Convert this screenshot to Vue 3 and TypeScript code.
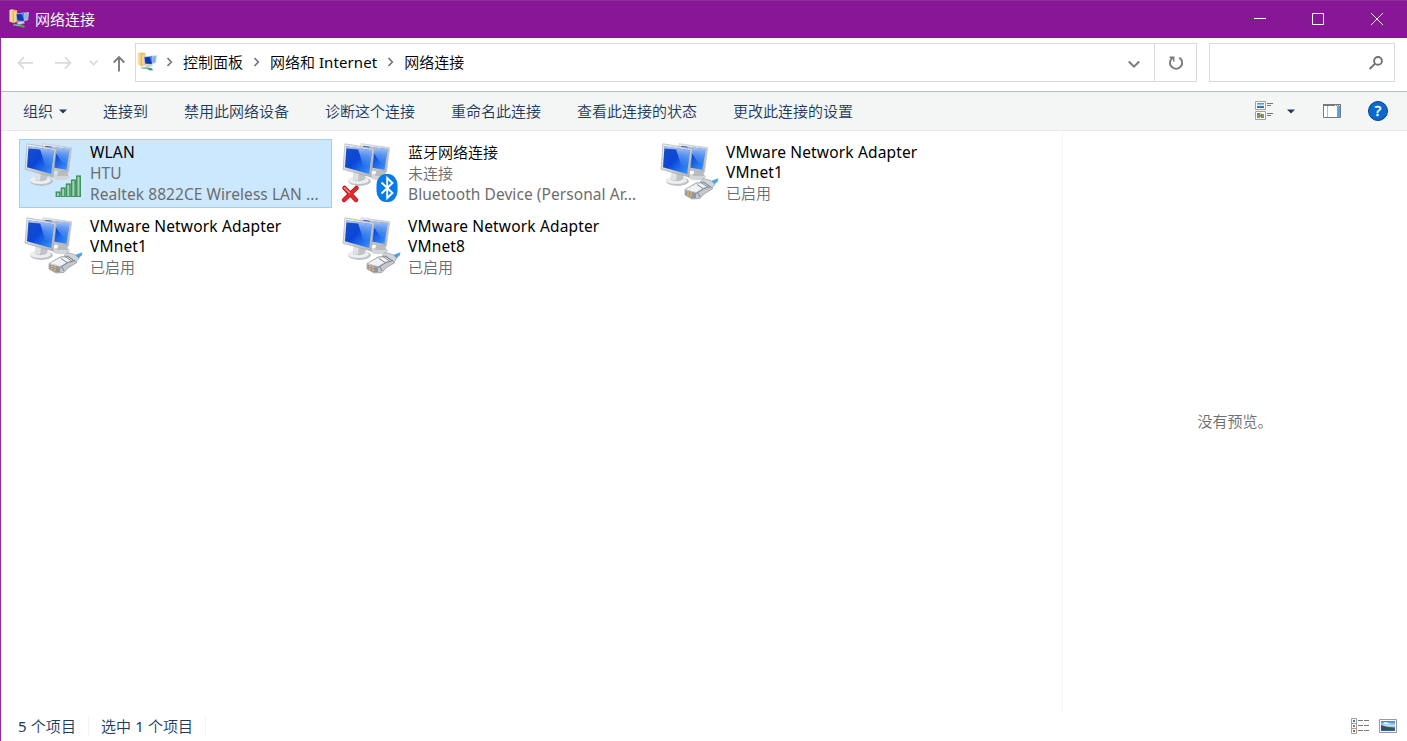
<script setup lang="ts">
type Badge = 'signal' | 'bluetooth' | 'plug'

interface Connection {
  title: string[]
  details: string[]
  badge: Badge
  disconnected?: boolean
  selected?: boolean
}

const crumbs = ['控制面板', '网络和 Internet', '网络连接']
const commands = ['连接到', '禁用此网络设备', '诊断这个连接', '重命名此连接', '查看此连接的状态', '更改此连接的设置']

const connections: Connection[] = [
  { title: ['WLAN'], details: ['HTU', 'Realtek 8822CE Wireless LAN ...'], badge: 'signal', selected: true },
  { title: ['蓝牙网络连接'], details: ['未连接', 'Bluetooth Device (Personal Ar...'], badge: 'bluetooth', disconnected: true },
  { title: ['VMware Network Adapter', 'VMnet1'], details: ['已启用'], badge: 'plug' },
  { title: ['VMware Network Adapter', 'VMnet1'], details: ['已启用'], badge: 'plug' },
  { title: ['VMware Network Adapter', 'VMnet8'], details: ['已启用'], badge: 'plug' },
]

const isLatin = (text: string): boolean => /^[\x20-\x7e]+$/.test(text)

// Splits mixed text so that Latin words and digits can carry their own weight.
const runs = (text: string): string[] => text.match(/[\x21-\x7e]+|[^\x21-\x7e]+/g) ?? []

const bars = [0, 1, 2, 3, 4].map((i) => ({ x: 36.6 + i * 5.1, h: 5.6 + i * 4 }))
</script>

<template>
  <div class="window">
    <svg class="defs" width="0" height="0">
      <defs>
        <linearGradient id="screen" x1="0" y1="0" x2="1" y2="1">
          <stop offset="0" stop-color="#1d4fc0" />
          <stop offset=".45" stop-color="#0a46d8" />
          <stop offset="1" stop-color="#3f9bff" />
        </linearGradient>
        <linearGradient id="shine" x1="0" y1="0" x2="0" y2="1">
          <stop offset="0" stop-color="#d4e9ff" stop-opacity=".85" />
          <stop offset="1" stop-color="#5ba8ff" stop-opacity=".15" />
        </linearGradient>
        <linearGradient id="metal" x1="0" y1="0" x2="1" y2="1">
          <stop offset="0" stop-color="#f5f6f7" />
          <stop offset="1" stop-color="#a9adb2" />
        </linearGradient>
        <linearGradient id="folder" x1="0" y1="0" x2="1" y2="0">
          <stop offset="0" stop-color="#ffe8a8" />
          <stop offset="1" stop-color="#dba650" />
        </linearGradient>
        <linearGradient id="photo" x1="0" y1="0" x2="0" y2="1">
          <stop offset="0" stop-color="#2f7fe0" />
          <stop offset=".5" stop-color="#d5ecfb" />
          <stop offset=".65" stop-color="#5e8190" />
          <stop offset="1" stop-color="#1e60ae" />
        </linearGradient>
        <symbol id="network-folder" viewBox="0 0 20 20">
          <path d="M.5 1 3 .2l5 1V12.500L4.500 14 .5 12.500z" fill="url(#folder)" />
          <path d="M4.500 2.500 8 1.500v11L4.500 14z" fill="#f6d68c" stroke="#c99c4d" stroke-width=".5" />
          <path d="M12.500 4.500 19.500 3.500l-.8 7.500-5.500.5z" fill="#7fb4ee" stroke="#d2d9df" stroke-width=".7" />
          <path d="m7 5 8.500-1-.3 8.500-7.200-.5z" fill="#1236b4" stroke="#c9d4e4" stroke-width=".7" />
          <path d="m12.500 4.800 2.600-.3-.4 6.500z" fill="#4a8cf0" />
          <path d="M9 12.800h5.500l1.500 1.400-5.500 1-3-1z" fill="#cdd2d4" />
          <path d="M4 15.300h7l3 .8 2 1.300-1.500 1-3-1-7-1z" fill="#7abf93" />
          <path d="M10.500 16.200h4l1.500 2h-4z" fill="#3f9a62" />
        </symbol>
      </defs>
    </svg>

    <header class="titlebar">
      <svg class="app-icon" viewBox="0 0 20 20"><use href="#network-folder" /></svg>
      <span class="app-title">网络连接</span>
      <div class="caption-buttons">
        <svg viewBox="0 0 12 12"><path d="M0 5.500h12" /></svg>
        <svg viewBox="0 0 12 12"><path d="M.5.5h11v11H.5z" /></svg>
        <svg viewBox="0 0 12 12"><path d="m0 0 12 12M12 0 0 12" /></svg>
      </div>
    </header>

    <nav class="navbar">
      <svg class="nav-arrows" viewBox="0 0 110 38" fill="none">
        <g stroke="#dadada" stroke-width="1.700">
          <path d="M17 19.900h15M23 14.200l-5.500 5.700 5.500 5.700" />
          <path d="M54 19.900h15.500M64 14.200l5.500 5.700-5.500 5.700" />
          <path d="m88.500 17.500 4 4 4-4" />
        </g>
      </svg>
      <svg class="up-arrow" viewBox="0 0 14 18" fill="none"><path d="M7 16.500V2M1.700 7.500 7 2l5.300 5.500" stroke="#7b7b7b" stroke-width="1.900" /></svg>
      <div class="address">
        <svg class="address-icon" viewBox="0 0 20 20"><use href="#network-folder" /></svg>
        <template v-for="crumb in crumbs" :key="crumb">
          <svg class="crumb-chevron" viewBox="0 0 7 10" fill="none"><path d="m1.500 1 3.800 4-3.800 4" stroke="#777" stroke-width="1.700" /></svg>
          <span class="crumb"><span v-for="(run, i) in runs(crumb)" :key="i" :class="{ word: isLatin(run) }">{{ run }}</span></span>
        </template>
        <svg class="dropdown" viewBox="0 0 13 9" fill="none"><path d="m1.800 1.500 5.200 5.200 5.200-5.200" stroke="#7b7b7b" stroke-width="2" /></svg>
        <div class="refresh">
          <svg viewBox="0 0 16 16" fill="none" stroke="#7b7b7b" stroke-width="1.900">
            <path d="M11.300 2.600A6.100 6.100 0 1 1 4.800 2.600" />
            <path d="M1.500 2.200h4.200v4.400" stroke-width="1.500" />
          </svg>
        </div>
      </div>
      <div class="search">
        <svg viewBox="0 0 14 14" fill="none" stroke="#777071" stroke-width="1.900">
          <circle cx="9" cy="4.900" r="3.900" /><path d="M6 7.600.7 13" />
        </svg>
      </div>
    </nav>

    <div class="toolbar">
      <div class="organize">
        <span>组织</span>
        <svg viewBox="0 0 8 5"><path d="M0 .5h8L4 4.500z" /></svg>
      </div>
      <span v-for="command in commands" :key="command" class="command">{{ command }}</span>
      <div class="toolbar-end">
        <svg class="view-icon" viewBox="0 0 19 20">
          <g fill="#fff" stroke="#a0a0a0"><path d="M.5.5h10v8H.5zM.5 10.500h10v8H.5z" /></g>
          <rect x="2" y="2" width="7" height="5" fill="url(#photo)" />
          <path d="M2 12h3v2H2z" fill="#547fc4" /><path d="M5 12h2v4H4z" fill="#e6c44d" /><path d="M2 14h3v3H2z" fill="#6aa363" /><path d="M6 13h3v4H6z" fill="#59a667" /><path d="M5 14h2v2H5z" fill="#cb604f" />
          <path d="M12 2.500h6M12 4.500h4M12 12.500h6M12 14.500h4" stroke="#777" />
        </svg>
        <svg class="view-caret" viewBox="0 0 8 5"><path d="M0 .5h8L4 4.500z" /></svg>
        <svg class="pane-icon" viewBox="0 0 18 14">
          <path d="M.5.5h17v13H.5z" fill="#fff" stroke="#777" />
          <path d="M0 1h18" stroke="#777" stroke-width="2" />
          <path d="M12 1.500h1m1 0h1m1 0h1" stroke="#eee" />
          <path d="M4.500 2v11" stroke="#bbb" />
          <path d="M14 2h3v11h-3z" fill="#51aae6" />
        </svg>
        <svg class="help" viewBox="0 0 20 20"><circle cx="10" cy="10" r="9.500" fill="#0869ce" stroke="#0b4180" /><text x="10" y="15.400" text-anchor="middle">?</text></svg>
      </div>
    </div>

    <main class="body">
      <section class="items">
        <article v-for="(item, index) in connections" :key="index" class="item" :class="{ selected: item.selected }">
          <svg class="item-icon" viewBox="0 0 68 68">
            <ellipse cx="42" cy="37.800" rx="9" ry="3.500" fill="#d3d6d9" />
            <path d="M40 29h8l1 8H38z" fill="#b9bcc1" />
            <path d="m24 4.700 28.500 4-.3 4-2.800 20.500L23 30z" fill="url(#metal)" stroke="#b8bcc2" stroke-width=".6" />
            <path d="m26 6.700 24.500 3.500-3 20.500L25 27z" fill="url(#screen)" />
            <path d="m32 7.600 18.500 2.600-2.500 15-5-2z" fill="url(#shine)" />
            <ellipse cx="22.500" cy="42.300" rx="11.500" ry="4.600" fill="#bec1c5" />
            <ellipse cx="21.300" cy="41.200" rx="10.500" ry="3.900" fill="#edeeef" />
            <path d="m17 32 12 3-1 5.500q-5 3-12 .5z" fill="#bfc2c7" />
            <path d="m17 32 5 1.500-1 8-5-1z" fill="#dfe1e3" />
            <path d="m8 4.800 29.500 5-.6 3-2.800 25.200L6 30.300z" fill="url(#metal)" stroke="#a9adb3" stroke-width=".7" />
            <path d="m9.500 7.200 25.500 4-2.800 23.800L8 28.300z" fill="url(#screen)" />
            <path d="M9.500 7.200 35 11.200l-1.800 14.500-7 1.300-5-16.500-11.800-1z" fill="url(#shine)" />

            <g v-if="item.badge === 'signal'">
              <g v-for="bar in bars" :key="bar.x">
                <rect :x="bar.x" :y="58 - bar.h" width="5" :height="bar.h" fill="#3e9362" />
                <rect :x="bar.x + 1.400" :y="59.500 - bar.h" width="2.100" :height="bar.h - 2.500" fill="#a5d0b0" />
              </g>
            </g>
            <g v-else-if="item.badge === 'bluetooth'">
              <rect x="39.500" y="35" width="21" height="28" rx="9.500" ry="11" fill="#087bea" />
              <path d="m44.500 43.500 11 10.500-5.300 5V39l5.300 5-11 10.500" fill="none" stroke="#fff" stroke-width="1.900" />
            </g>
            <g v-else>
              <path d="m53 45 3-3 7.500-2.800-.8 3-5.200 5.300z" fill="#46a6e8" />
              <path d="m45 43 3-3.500 8 2 4 4-5 5.500z" fill="#d0d5da" stroke="#8c949d" stroke-width=".6" />
              <path d="m30 50.500 11-6.500 8-1 9 6.500-9 5.500-4 4.500-8 .5-7-4z" fill="#c4c8cd" stroke="#858b92" stroke-width=".6" />
              <path d="m31 50.300 10-5.400 8-1 4 2.500-12 6.500z" fill="#f0f2f4" />
              <path d="m30.500 51.500 10.500 2.500v5l-4 .3-6.500-3.300z" fill="#90969c" />
              <path d="m32 53 2 .7m1 .3 2 .7m-5 .8 2 .7m1 .3 2 .7" stroke="#efb664" stroke-width="1.400" />
              <path d="m41 54.500 8-5 7-2M42 45.500l6 4m0-6.500 6 4M46 43.500l6 4m-9 6.500 2 4" stroke="#707a84" stroke-width=".9" fill="none" />
            </g>
            <g v-if="item.disconnected" fill="none" stroke-linecap="round">
              <path d="m7.500 49 11.500 12M19.500 49 7 61" stroke="#b51219" stroke-width="4.500" />
              <path d="m7.500 49 11.500 12M19.500 49 7 61" stroke="#e42b2c" stroke-width="3" />
              <path d="m7.500 48.700 5 5" stroke="#f3918d" stroke-width="1.300" />
            </g>
          </svg>
          <div class="item-text">
            <div v-for="line in item.title" :key="line" class="item-title" :class="{ latin: isLatin(line) }">{{ line }}</div>
            <div v-for="line in item.details" :key="line" class="item-detail" :class="{ latin: isLatin(line) }">{{ line }}</div>
          </div>
        </article>
      </section>
      <aside class="preview">没有预览。</aside>
    </main>

    <footer class="statusbar">
      <span class="count"><span class="word">5</span> 个项目</span>
      <span class="selection">选中 <span class="word">1</span> 个项目</span>
      <svg class="details-view" viewBox="0 0 18 16">
        <path d="M.5.5h5v15h-5zM.5 5.500h5M.5 10.500h5" fill="#fff" stroke="#a0a0a0" />
        <path d="M2 2h2v2H2z" fill="#3f7fc1" /><path d="M2 7h2v2H2z" fill="#9b7758" /><path d="M2 12h2v2H2z" fill="#bd5920" />
        <path d="M7 2.500h5m1 0h5M7 7.500h5m1 0h5M7 12.500h5m1 0h5" stroke="#807878" />
      </svg>
      <svg class="thumb-view" viewBox="0 0 18 14">
        <path d="M.5.5h17v13H.5z" fill="#fff" stroke="#999" />
        <path d="M2 2h14v10H2z" fill="url(#photo)" />
        <path d="m2 6 5 1.500 9 2V11H2z" fill="#31545d" />
        <path d="M4 5q2-3 4-1.500L12 5z" fill="#eef8ff" />
      </svg>
    </footer>
  </div>
</template>

<style>
body {
  margin: 0;
  overflow: hidden;
}
</style>

<style scoped>
.window {
  box-sizing: border-box;
  width: 1407px;
  height: 741px;
  display: flex;
  flex-direction: column;
  border-left: 1px solid #8e2d9c;
  background: #fff;
  color: #000;
  font: 350 15px/20px "Noto Sans", "Noto Sans CJK SC DemiLight", "Noto Sans CJK SC", sans-serif;
  white-space: nowrap;
}
svg { display: block; flex: none; }
.defs { position: absolute; }
.word { font-weight: 400; }
.titlebar {
  box-sizing: border-box;
  height: 38px;
  margin-left: -1px;
  padding-left: 9px;
  display: flex;
  align-items: center;
  border-top: 1px solid #8e2d9c;
  background: #881798;
  color: #fff;
  flex: none;
}
.app-icon { width: 20px; height: 20px; margin-top: -2px; }
.app-title { margin-left: 6px; padding-bottom: 2px; }
.caption-buttons { margin-left: auto; margin-right: 24px; display: flex; gap: 47px; }
.caption-buttons svg { width: 12px; height: 12px; margin-top: -1px; fill: none; stroke: #fff; stroke-width: 1; }
.caption-buttons svg:first-child { margin-right: -1px; }
.navbar {
  box-sizing: border-box;
  height: 54px;
  padding: 5px 12px 10px 0;
  display: flex;
  border-bottom: 1px solid #bcbfc0;
  flex: none;
}
.nav-arrows { width: 110px; height: 38px; }
.up-arrow { width: 14px; height: 18px; margin: 12px 9px 0 1px; }
.address {
  box-sizing: border-box;
  width: 1062px;
  height: 39px;
  display: flex;
  align-items: center;
  border: 1px solid #d9d9d9;
}
.address-icon { width: 20px; height: 20px; margin: -2px 9px 0 1px; }
.crumb-chevron { width: 7px; height: 10px; margin-right: 10px; margin-top: -2px; }
.crumb { margin-right: 10px; padding-bottom: 2px; white-space: pre; }
.crumb .word { letter-spacing: .1px; }
.dropdown { width: 13px; height: 9px; margin-left: auto; margin-right: 14px; margin-top: 3px; }
.refresh {
  width: 41px;
  height: 37px;
  display: grid;
  place-items: center;
  border-left: 1px solid #d9d9d9;
}
.refresh svg { width: 16px; height: 16px; }
.search {
  box-sizing: border-box;
  width: 186px;
  height: 39px;
  margin-left: 12px;
  padding-right: 11px;
  display: flex;
  align-items: center;
  justify-content: flex-end;
  border: 1px solid #d9d9d9;
}
.search svg { width: 14px; height: 14px; }
.toolbar {
  box-sizing: border-box;
  height: 39px;
  padding-left: 22px;
  display: flex;
  align-items: center;
  gap: 36px;
  border-bottom: 1px solid #e8eaea;
  background: #f4f6f6;
  color: #1e395b;
  flex: none;
}
.organize { display: flex; align-items: center; gap: 6px; }
.organize svg, .view-caret { width: 8px; height: 5px; fill: #1e395b; }
.toolbar-end { display: flex; align-items: center; margin-left: auto; margin-right: 19px; }
.view-icon { width: 19px; height: 20px; }
.view-caret { margin-left: 13px; margin-right: 28px; }
.pane-icon { width: 18px; height: 14px; margin-right: 27px; }
.help { width: 20px; height: 20px; }
.help text { font: 15px "Noto Sans", sans-serif; fill: #fff; stroke: #fff; stroke-width: .4; }
.body { height: 580px; display: flex; flex: none; }
.items {
  box-sizing: border-box;
  width: 1061px;
  padding: 8px 0 0 18px;
  display: grid;
  grid-template-columns: repeat(3, 313px);
  grid-auto-rows: 69px;
  gap: 5px;
  align-content: start;
}
.item { box-sizing: border-box; display: flex; border: 1px solid transparent; }
.item.selected { border-color: #99d1ff; background: #cce8ff; }
.item-icon { width: 68px; height: 68px; margin: -1px 0 0 -1px; }
.item-text { padding: 2px 0 0 3px; }
.item-title { height: 20px; line-height: 20px; }
.item-detail { height: 21px; line-height: 22px; color: #6d6d6d; }
.latin { font-size: 15.5px; font-weight: 400; letter-spacing: .06px; }
.item-title.latin { letter-spacing: .16px; }
.preview {
  box-sizing: border-box;
  flex: 1;
  display: flex;
  align-items: center;
  justify-content: center;
  border-left: 1px solid #f5f5f5;
  color: #6d6d6d;
}
.statusbar {
  height: 30px;
  padding: 0 10px 0 17px;
  display: flex;
  align-items: center;
  color: #1e395b;
}
.count { padding-right: 12px; border-right: 1px solid #f3f3f3; letter-spacing: .1px; }
.selection { padding: 0 12px 0 12px; border-right: 1px solid #f3f3f3; letter-spacing: .1px; }
.details-view { width: 18px; height: 16px; margin-left: auto; }
.thumb-view { width: 18px; height: 14px; margin-left: 10px; }
</style>
